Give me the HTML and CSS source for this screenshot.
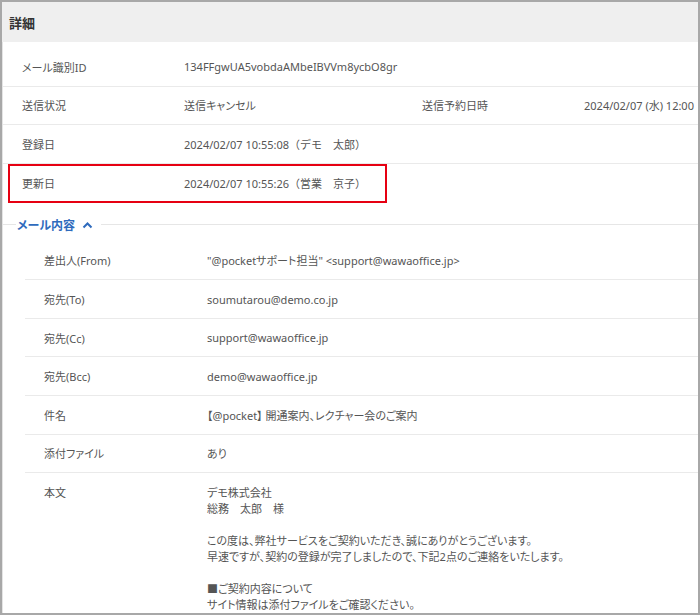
FILE: index.html
```html
<!DOCTYPE html>
<html lang="ja">

<head>
    <meta charset="UTF-8">
    <meta name="viewport" content="width=device-width, initial-scale=1.0">
    <title>詳細</title>
    <link rel="stylesheet" href="styles.css">
</head>

<body>
    <div class="panel">
        <div class="panel-head">詳細</div>

        <div class="panel-body">
            <div class="info">
                <div class="row">
                    <div class="label">メール識別ID</div>
                    <div class="value wide">134FFgwUA5vobdaAMbeIBVVm8ycbO8gr</div>
                </div>
                <div class="row">
                    <div class="label">送信状況</div>
                    <div class="value">送信キャンセル</div>
                    <div class="label">送信予約日時</div>
                    <div class="value">2024/02/07 (水) 12:00</div>
                </div>
                <div class="row">
                    <div class="label">登録日</div>
                    <div class="value wide full">2024/02/07 10:55:08（デモ　太郎）</div>
                </div>
                <div class="row last">
                    <div class="label">更新日</div>
                    <div class="value wide full">2024/02/07 10:55:26（営業　京子）</div>
                </div>
                <div class="mark"></div>
            </div>

            <div class="section-title">
                <span class="line short"></span>
                <span class="title-text">メール内容
                    <svg class="chevron" width="11" height="8" viewBox="0 0 11 8">
                        <path d="M1.5 6.5 L5.5 2.5 L9.5 6.5" fill="none" stroke="#2f6bbd" stroke-width="2" />
                    </svg>
                </span>
                <span class="line"></span>
            </div>

            <div class="mail">
                <div class="mail-row">
                    <div class="mail-label">差出人(From)</div>
                    <div class="mail-value">"@pocketサポート担当" &lt;support@wawaoffice.jp&gt;</div>
                </div>
                <div class="mail-row">
                    <div class="mail-label">宛先(To)</div>
                    <div class="mail-value">soumutarou@demo.co.jp</div>
                </div>
                <div class="mail-row">
                    <div class="mail-label">宛先(Cc)</div>
                    <div class="mail-value">support@wawaoffice.jp</div>
                </div>
                <div class="mail-row">
                    <div class="mail-label">宛先(Bcc)</div>
                    <div class="mail-value">demo@wawaoffice.jp</div>
                </div>
                <div class="mail-row">
                    <div class="mail-label">件名</div>
                    <div class="mail-value">【@pocket】 開通案内、レクチャー会のご案内</div>
                </div>
                <div class="mail-row">
                    <div class="mail-label">添付ファイル</div>
                    <div class="mail-value">あり</div>
                </div>
                <div class="mail-row body-row">
                    <div class="mail-label">本文</div>
                    <div class="mail-value mail-text">デモ株式会社
総務　太郎　様

この度は、弊社サービスをご契約いただき、誠にありがとうございます。
早速ですが、契約の登録が完了しましたので、下記2点のご連絡をいたします。

■ご契約内容について
サイト情報は添付ファイルをご確認ください。</div>
                </div>
            </div>
        </div>
    </div>
</body>
</html>
```

FILE: styles.css
```css
* {
    box-sizing: border-box;
}

body {
    margin: 0;
    font-family: "Noto Sans", "Noto Sans CJK JP", sans-serif;
    font-size: 11px;
    font-feature-settings: "palt";
    color: #555555;
    background-color: #ffffff;
}

.panel {
    width: 700px;
    height: 615px;
    border: 2px solid #a8a8a8;
    overflow: hidden;
}

.panel-head {
    height: 40px;
    background-color: #efefef;
    padding-left: 7px;
    display: flex;
    align-items: center;
    font-size: 13px;
    font-weight: bold;
    color: #333333;
    font-feature-settings: normal;
}

.panel-body {
    border-left: 1px solid #e4e4e4;
}

.info {
    position: relative;
    padding-top: 6px;
}

.row {
    display: grid;
    grid-template-columns: 162px 238px 162px 1fr;
    height: 38.67px;
    align-items: center;
    padding-left: 19px;
    border-bottom: 1px solid #eaeaea;
    white-space: nowrap;
}

.row.last {
    border-bottom: 0;
}

.value.wide {
    grid-column: 2 / 5;
}

.full {
    font-feature-settings: normal;
}

.mark {
    position: absolute;
    left: 5px;
    top: 122px;
    width: 379px;
    height: 39px;
    border: 2px solid #e60012;
}

.section-title {
    display: flex;
    align-items: center;
    padding-top: 14px;
    height: 39px;
    padding-bottom: 9px;
}

.line {
    flex: 1;
    height: 1px;
    background-color: #e6e6e6;
}

.line.short {
    flex: 0 0 13px;
}

.title-text {
    padding: 0 8px 0 1px;
    font-size: 12px;
    font-weight: bold;
    color: #2f6bbd;
    white-space: nowrap;
}

.chevron {
    margin-left: 4px;
    vertical-align: 1px;
}

.mail {
    margin-left: 22px;
}

.mail-row {
    display: grid;
    grid-template-columns: 163px 1fr;
    height: 38.6px;
    align-items: center;
    padding-left: 19px;
    border-bottom: 1px solid #eaeaea;
    white-space: nowrap;
}

.mail-row.body-row {
    height: auto;
    align-items: start;
    padding-top: 12px;
    line-height: 16px;
    border-bottom: 0;
}

.mail-text {
    white-space: pre;
}
```
